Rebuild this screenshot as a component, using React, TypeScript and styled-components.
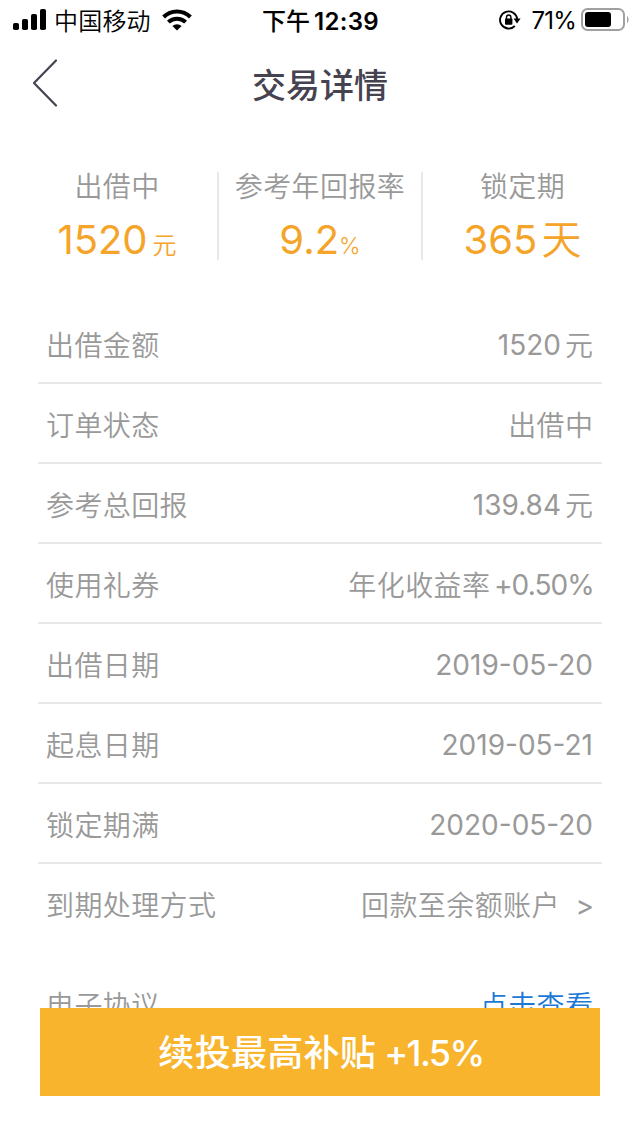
import React from "react";
import styled, { createGlobalStyle } from "styled-components";

const GlobalStyle = createGlobalStyle`
  * { box-sizing: border-box; }
  body { margin: 0; background: #fff; }
`;

const Screen = styled.div`
  position: relative;
  display: flex;
  flex-direction: column;
  width: 640px;
  height: 1136px;
  overflow: hidden;
  background: #fff;
  color: #999;
  font-family: Inter, "Noto Sans CJK SC", sans-serif;
  white-space: nowrap;
`;

const StatusBar = styled.header`
  display: grid;
  grid-template-columns: 1fr auto 1fr;
  align-items: center;
  height: 40px;
  padding: 0 11px 0 13px;
  color: #000;
  font-size: 24px;
  line-height: 43px;
`;

const StatusGroup = styled.div<{ $end?: boolean }>`
  display: flex;
  align-items: center;
  justify-content: ${(p) => (p.$end ? "flex-end" : "flex-start")};
  svg { display: block; flex: none; }
`;

const Carrier = styled.span`
  margin: 0 11px 0 7px;
  height: 40px;
  font-weight: 350;
  letter-spacing: 0.2px;
`;

const Clock = styled.div`
  display: flex;
  gap: 4px;
  height: 40px;
  margin-right: 1px;
  font-weight: 500;
`;

const ClockDigits = styled.span`
  font-weight: 600;
  letter-spacing: 0.3px;
`;

const BatteryLevel = styled.span`
  height: 40px;
  margin: 0 5px 0 10px;
  letter-spacing: -0.8px;
  line-height: 42px;
`;

const NavBar = styled.nav`
  display: grid;
  grid-template-columns: 80px 1fr 80px;
  align-items: center;
  height: 88px;
`;

const BackButton = styled.button`
  display: flex;
  height: 88px;
  padding: 18px 0 0 31px;
  border: 0;
  background: none;
`;

const Title = styled.h1`
  height: 88px;
  margin: 0;
  color: #464350;
  font-size: 34px;
  font-weight: 500;
  line-height: 91px;
  text-align: center;
`;

const Stats = styled.section`
  display: grid;
  grid-template-columns: 204px 204px 204px;
  margin: 44px 0 0 15px;
`;

const Stat = styled.div`
  display: flex;
  flex-direction: column;
  align-items: center;
  height: 88px;
  border-right: 2px solid #e8e8e8;
  &:first-child { padding-left: 2px; }
  &:last-child { border-color: transparent; padding-right: 3px; }
`;

const StatLabel = styled.div`
  flex: none;
  height: 44px;
  font-size: 28px;
  font-weight: 350;
  line-height: 30px;
  letter-spacing: 0.4px;
`;

const StatValue = styled.div`
  height: 44px;
  color: #f5a42a;
  font-size: 40px;
  font-weight: 380;
  line-height: 48px;
`;

const Unit = styled.span<{ $size: number; $gap: number }>`
  margin-left: ${(p) => p.$gap}px;
  font-size: ${(p) => p.$size}px;
  font-weight: 350;
`;

const Details = styled.dl`
  display: flex;
  flex-direction: column;
  margin: 44px 38px 0;
`;

const Row = styled.div<{ $plain?: boolean; $spaced?: boolean }>`
  display: flex;
  justify-content: space-between;
  flex: none;
  height: 80px;
  margin-top: ${(p) => (p.$spaced ? 20 : 0)}px;
  padding: 0 9px 0 8px;
  border-bottom: 2px solid ${(p) => (p.$plain ? "transparent" : "#e8e8e8")};
  font-size: 28px;
  font-weight: 350;
  line-height: 84px;
`;

const Label = styled.dt`
  letter-spacing: 0.4px;
`;

const Value = styled.dd<{ $link?: boolean }>`
  display: flex;
  gap: 4px;
  margin: 0;
  color: ${(p) => (p.$link ? "#1b78d6" : "inherit")};
`;

const Digits = styled.span<{ $track?: number }>`
  margin-right: ${(p) => p.$track ?? 0}px;
  font-weight: 380;
  letter-spacing: ${(p) => p.$track ?? 0}px;
  line-height: 82px;
`;

const Han = styled.span`
  letter-spacing: 0.4px;
  margin-right: -0.4px;
`;

const Chevron = styled.span`
  margin: 0 -1px 0 12px;
  font-weight: 400;
`;

const RenewButton = styled.button`
  position: absolute;
  left: 40px;
  bottom: 40px;
  display: flex;
  justify-content: center;
  gap: 8px;
  width: 560px;
  height: 88px;
  padding: 0 0 0 2px;
  border: 0;
  background: #f8b42d;
  color: #fff;
  font: 500 36px/90px Inter, "Noto Sans CJK SC", sans-serif;
`;

const RenewText = styled.span`
  letter-spacing: 0.3px;
`;

const RenewRate = styled.span`
  letter-spacing: -1.6px;
`;

function SignalIcon() {
  return (
    <svg width="34" height="22" viewBox="0 0 34 22">
      <rect x="0" y="14" width="6" height="7" rx="1.8" />
      <rect x="9" y="10" width="6" height="11" rx="1.8" />
      <rect x="18" y="5" width="6" height="16" rx="1.8" />
      <rect x="27" y="0" width="6" height="21" rx="1.8" />
    </svg>
  );
}

function WifiIcon() {
  return (
    <svg width="30" height="22" viewBox="0 0 30 22">
      <g fill="none" stroke="#000" strokeWidth="4">
        <path d="M1.6 8a19 19 0 0 1 26.8 0" />
        <path d="M6.4 13.2a12.2 12.2 0 0 1 17.2 0" />
      </g>
      <path d="M15 21.5 10.4 17a6.6 6.6 0 0 1 9.2 0z" />
    </svg>
  );
}

function RotationLockIcon() {
  return (
    <svg width="22" height="20" viewBox="0 0 22 20">
      <path d="M15.8 16A8.6 8.6 0 1 1 18.2 9" fill="none" stroke="#000" strokeWidth="1.9" />
      <path d="M14.6 8.6h7L18 13.4z" />
      <rect x="6" y="8.4" width="7.4" height="6.4" rx=".8" />
      <path d="M7.5 9V7.2a2.2 2.2 0 0 1 4.4 0V9" fill="none" stroke="#000" strokeWidth="1.4" />
    </svg>
  );
}

function BatteryIcon() {
  return (
    <svg width="48" height="24" viewBox="0 0 48 24">
      <rect x="1" y="1" width="42" height="21" rx="5.5" fill="none" stroke="#a0a0a0" strokeWidth="2" />
      <rect x="4" y="4" width="26" height="15" rx="3" />
      <path d="M46 8c2 1.2 2 6 0 7.2z" fill="#a0a0a0" />
    </svg>
  );
}

export default function App() {
  return (
    <Screen>
      <GlobalStyle />
      <StatusBar>
        <StatusGroup>
          <SignalIcon />
          <Carrier>中国移动</Carrier>
          <WifiIcon />
        </StatusGroup>
        <Clock>
          下午<ClockDigits>12:39</ClockDigits>
        </Clock>
        <StatusGroup $end>
          <RotationLockIcon />
          <BatteryLevel>71%</BatteryLevel>
          <BatteryIcon />
        </StatusGroup>
      </StatusBar>

      <NavBar>
        <BackButton aria-label="返回">
          <svg width="28" height="50" viewBox="0 0 28 50">
            <path d="M25 2.5 3 25 25 47.5" fill="none" stroke="#464350" strokeWidth="2.2" strokeLinecap="round" strokeLinejoin="round" />
          </svg>
        </BackButton>
        <Title>交易详情</Title>
      </NavBar>

      <Stats>
        <Stat>
          <StatLabel>出借中</StatLabel>
          <StatValue>1520<Unit $size={24} $gap={5}>元</Unit></StatValue>
        </Stat>
        <Stat>
          <StatLabel>参考年回报率</StatLabel>
          <StatValue>9.2<Unit $size={23} $gap={0}>%</Unit></StatValue>
        </Stat>
        <Stat>
          <StatLabel>锁定期</StatLabel>
          <StatValue>365<Unit $size={40} $gap={4}>天</Unit></StatValue>
        </Stat>
      </Stats>

      <Details>
        <Row>
          <Label>出借金额</Label>
          <Value><Digits>1520</Digits><Han>元</Han></Value>
        </Row>
        <Row>
          <Label>订单状态</Label>
          <Value><Han>出借中</Han></Value>
        </Row>
        <Row>
          <Label>参考总回报</Label>
          <Value><Digits>139.84</Digits><Han>元</Han></Value>
        </Row>
        <Row>
          <Label>使用礼券</Label>
          <Value><Han>年化收益率</Han><Digits $track={-0.9}>+0.50%</Digits></Value>
        </Row>
        <Row>
          <Label>出借日期</Label>
          <Value><Digits>2019-05-20</Digits></Value>
        </Row>
        <Row>
          <Label>起息日期</Label>
          <Value><Digits>2019-05-21</Digits></Value>
        </Row>
        <Row>
          <Label>锁定期满</Label>
          <Value><Digits>2020-05-20</Digits></Value>
        </Row>
        <Row $plain>
          <Label>到期处理方式</Label>
          <Value><Han>回款至余额账户</Han><Chevron>&gt;</Chevron></Value>
        </Row>
        <Row $plain $spaced>
          <Label>电子协议</Label>
          <Value $link><Han>点击查看</Han></Value>
        </Row>
      </Details>

      <RenewButton>
        <RenewText>续投最高补贴</RenewText>
        <RenewRate>+1.5%</RenewRate>
      </RenewButton>
    </Screen>
  );
}
